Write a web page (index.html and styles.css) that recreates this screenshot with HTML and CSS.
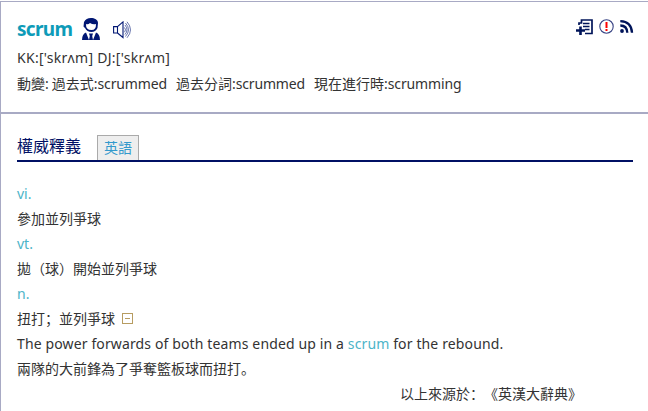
FILE: index.html
```html
<!DOCTYPE html>
<html lang="zh-CN">
<head>
<meta charset="utf-8">
<title>scrum</title>
<link rel="stylesheet" href="styles.css">
</head>
<body>
<main class="card">
  <header class="entry">
    <div class="title-row">
      <h1 class="word">scrum</h1>
      <svg class="person" width="18" height="22" viewBox="0 0 18 22">
        <path fill="#001673" fill-rule="evenodd" d="M9 0C12.500 0 16 1.500 16 5L15.500 10Q13.500 14 9.500 14Q5 14 3 10L1.500 8.500L2 4Q4 0 9 0ZM4 6Q3.700 12 9.500 12Q14.200 12 14 6Q11 7 8 5Q6 7 4 6Z"/>
        <path fill="#001673" d="M0 22Q0 16 4 14.500L7 22ZM18 22Q18 16 14 14.500L11 22ZM7 15.500H11L10.200 18L11 22H7L7.800 18Z"/>
      </svg>
      <svg class="speaker" width="20" height="18" viewBox="0 0 20 18" fill="none" stroke="#001673">
        <path stroke-width="1.100" d="M.6 5.600H4.500V12H.6ZM4.500 5.600L10 .9V16.500L4.500 12"/>
        <path stroke-width=".6" d="M11.500 6.500Q13.500 8.800 11.500 11.200M12 4Q16 8.800 12 13.500M12.500 2Q18.500 8.800 12.500 15.500M14 .8Q21 8.800 14 16.800"/>
      </svg>
      <div class="tools">
        <svg width="17" height="16" viewBox="0 0 17 16" fill="none" stroke="#001459">
          <path stroke-width="1.700" d="M3 6V4H5.500V1H16V14.500H9"/>
          <path stroke-width="1.300" d="M7 4.500H13.500M7 7.500H13.500M9 10.500H13.500"/>
          <path stroke-width="2.600" d="M0 11.500H9M4.500 7.500V16"/>
        </svg>
        <svg width="15" height="15" viewBox="0 0 15 15">
          <circle cx="7.500" cy="7.500" r="6.700" fill="#fff" stroke="#3a4585" stroke-width="1.100"/>
          <path fill="#f00" d="M6.500 3H8.500V9H6.500ZM6.500 10H8.500V12H6.500Z"/>
        </svg>
        <svg class="feed" width="14" height="13" viewBox="0 0 14 13" fill="none" stroke="#001459" stroke-width="2.300">
          <circle cx="2" cy="11" r="1.900" fill="#001459" stroke="none"/>
          <path d="M.3 5.500Q7 5.500 7.300 12.800M.3 1.200Q11.500 1.600 12 12.800"/>
        </svg>
      </div>
    </div>
    <p class="phonetic">KK:['skrʌm] DJ:['skrʌm]</p>
    <p class="forms"><span>動變:</span><span>過去式:<span class="la">scrummed</span></span><span>過去分詞:<span class="la">scrummed</span></span><span>現在進行時:<span class="la">scrumming</span></span></p>
  </header>
  <section class="meaning">
    <div class="tabs"><h2>權威釋義</h2><span class="tab">英語</span></div>
    <div class="lines">
      <p class="pos">vi.</p>
      <p>參加並列爭球</p>
      <p class="pos">vt.</p>
      <p>拋（球）開始並列爭球</p>
      <p class="pos">n.</p>
      <p class="fold">扭打；並列爭球<i class="minus"></i></p>
      <p class="example">The power forwards of both teams ended up in a <b>scrum</b> for the rebound.</p>
      <p>兩隊的大前鋒為了爭奪籃板球而扭打。</p>
      <p class="source">以上來源於：《英漢大辭典》</p>
    </div>
  </section>
</main>
</body>
</html>
```
FILE: styles.css
```css
* { box-sizing: border-box; }
body {
  margin: 0;
  overflow: hidden;
  background: #fff;
  color: #333;
  font: 14px/25px "Noto Sans", "Noto Sans CJK SC", sans-serif;
  text-spacing-trim: space-all;
}
h1, h2, p { margin: 0; }
svg { display: block; flex: none; }
.card {
  height: 411px;
  margin-top: 1px;
  border-top: 1px solid #a8aac4;
  border-left: 1px solid #a8aac4;
}
.entry {
  height: 112px;
  padding: 12px 15px 0 16px;
  border-bottom: 2px solid #a8aac4;
}
.title-row { display: flex; height: 31px; }
.word {
  width: 55px;
  margin-right: 10px;
  color: #0d9bb8;
  font-size: 19px;
  line-height: 31px;
  letter-spacing: -0.7px;
}
.person { margin-top: 4px; }
.speaker { margin: 7px 0 0 13px; }
.tools { display: flex; gap: 6px; margin: 5px -1px 0 auto; }
.feed { margin-top: 1px; }
.phonetic { letter-spacing: 0.28px; }
.forms { display: flex; white-space: nowrap; line-height: 27px; }
.forms > span { margin-right: 9px; }
.forms > span:first-child { margin-right: 3px; }
.la { letter-spacing: -0.15px; }
.meaning { padding: 20px 15px 0 16px; white-space: nowrap; }
.tabs {
  display: flex;
  align-items: flex-end;
  height: 28px;
  border-bottom: 2px solid #001064;
}
.tabs h2 {
  width: 80px;
  color: #001064;
  font-size: 16px;
  font-weight: 400;
  line-height: 28px;
}
.tab {
  width: 42px;
  height: 25px;
  padding-left: 6px;
  border: 1px solid #aaa;
  border-bottom: 0;
  background: #eee;
  color: #3399cc;
  line-height: 23px;
}
.lines { padding-top: 19px; }
.lines p { height: 25px; }
.pos, .example b { color: #4cb4c8; font-weight: 400; }
.fold { display: flex; align-items: center; }
.minus {
  display: grid;
  place-items: center;
  width: 11px;
  height: 11px;
  margin-left: 7px;
  border: 1px solid #b79c61;
}
.minus::before { content: ""; width: 5px; height: 1px; background: #b79c61; }
.example { letter-spacing: 0.13px; }
.source { padding-left: 383px; }
```
